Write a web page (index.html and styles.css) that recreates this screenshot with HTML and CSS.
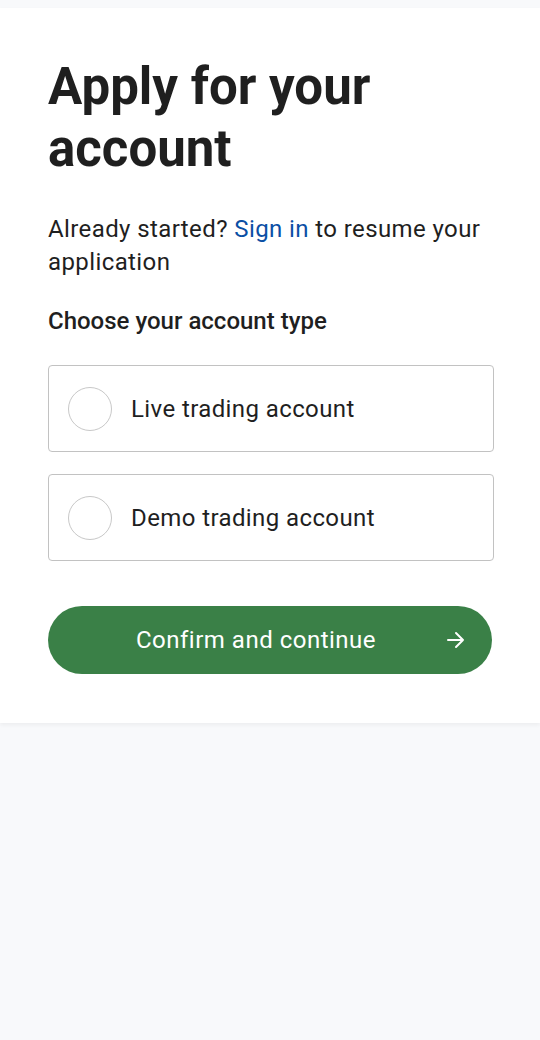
FILE: index.html
```html
<!DOCTYPE html>
<html lang="en">
<head>
<meta charset="utf-8">
<title>Apply for your account</title>
<link rel="stylesheet" href="styles.css">
</head>
<body>
<div class="topbar"></div>
<main class="card">
  <h1 class="title">Apply for your account</h1>
  <p class="intro">Already started? <a class="link" href="#">Sign in</a> to resume your application</p>
  <h2 class="label">Choose your account type</h2>
  <div class="options">
    <label class="option">
      <span class="radio"></span>
      <span class="option-text">Live trading account</span>
    </label>
    <label class="option">
      <span class="radio"></span>
      <span class="option-text">Demo trading account</span>
    </label>
  </div>
  <button class="btn" type="button">
    <span class="btn-text">Confirm and continue</span>
    <svg class="btn-icon" width="20" height="20" viewBox="0 0 20 20" fill="none" stroke="#ffffff" stroke-width="2" stroke-linecap="round" stroke-linejoin="round"><path d="M2 10h15M10 3l7 7-7 7"/></svg>
  </button>
</main>
</body>
</html>
```

FILE: styles.css
```css
* { box-sizing: border-box; }
html, body { margin: 0; padding: 0; }
body {
  background: #f8f9fb;
  font-family: Roboto, "Noto Sans", Arial, sans-serif;
  color: #1f1f1f;
  width: 540px;
  min-height: 1040px;
}
.topbar { height: 8px; background: #f8f9fb; }
.card {
  background: #ffffff;
  padding: 48px 46px 49px 48px;
  box-shadow: 0 2px 4px rgba(0,0,0,0.05);
}
.title {
  margin: 0;
  font-size: 51px;
  line-height: 62px;
  font-weight: 700;
  letter-spacing: 0;
  color: #1f1f1f;
}
.intro {
  margin: 33px 0 0;
  font-size: 24px;
  line-height: 33px;
  letter-spacing: 0.4px;
  color: #1f1f1f;
}
.link { color: #0b4fa5; text-decoration: none; }
.label {
  margin: 26px 0 0;
  font-size: 24px;
  line-height: 33px;
  font-weight: 500;
  letter-spacing: 0;
  color: #1f1f1f;
}
.options {
  margin-top: 27px;
  display: flex;
  flex-direction: column;
  gap: 22px;
}
.option {
  display: flex;
  align-items: center;
  gap: 19px;
  height: 87px;
  padding: 0 19px;
  border: 1px solid #c2c2c2;
  border-radius: 4px;
}
.radio {
  width: 44px;
  height: 44px;
  border-radius: 50%;
  border: 1px solid #c8c8c8;
  flex: none;
}
.option-text {
  font-size: 24px;
  letter-spacing: 0.4px;
  color: #1f1f1f;
}
.btn {
  margin-top: 45px;
  width: 444px;
  height: 68px;
  border: none;
  border-radius: 34px;
  background: #3a8047;
  color: #ffffff;
  font-family: Roboto, "Noto Sans", Arial, sans-serif;
  font-size: 24px;
  letter-spacing: 0.5px;
  display: flex;
  align-items: center;
  justify-content: center;
  position: relative;
  padding: 0 28px 0 0;
}
.btn-icon { position: absolute; right: 26px; top: 24px; }
```
